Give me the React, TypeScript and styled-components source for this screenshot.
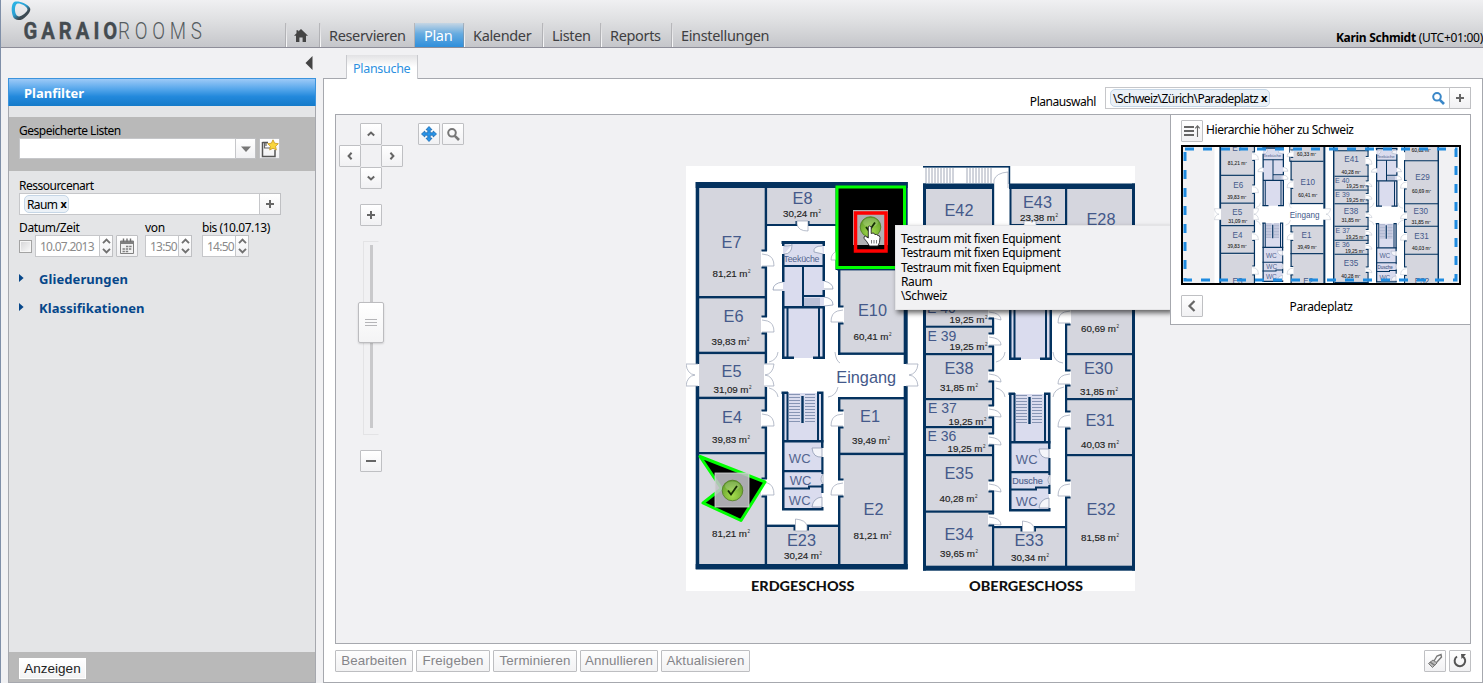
import React from 'react';
import styled, { createGlobalStyle, css } from 'styled-components';

const GlobalStyle = createGlobalStyle`
  * { box-sizing: border-box; }
  body { margin: 0; overflow: hidden; background: #f1f1f3; }
`;

const UI = `'Noto Sans', 'Open Sans', sans-serif`;
const LINE = '#a6a8ae';
const NAVY = '#04325f';

const Window = styled.div`
  width: 1483px;
  height: 683px;
  display: flex;
  flex-direction: column;
  border-left: 1px solid #7f8fa8;
  background: #f1f1f3;
  font: 12px/15px ${UI};
  color: #000;
  overflow: hidden;
`;

/* ---------- header ---------- */

const Header = styled.header`
  height: 48px;
  flex: none;
  display: flex;
  align-items: flex-end;
  background: linear-gradient(#f0f0f2, #dedfe1 45%, #c5c6ca);
  border-bottom: 1px solid #8e8e99;
`;

const LogoBox = styled.div`
  width: 285px;
  height: 47px;
`;

const Nav = styled.nav`
  display: flex;
  flex: 1;
  height: 24px;
`;

const NavItem = styled.a<{ $w: number; $active?: boolean }>`
  width: ${(p) => p.$w}px;
  padding-left: 8px;
  font-size: 14.5px;
  line-height: 24px;
  letter-spacing: -0.34px;
  white-space: nowrap;
  color: #3f3f42;
  border-left: 1px solid transparent;
  border-image: linear-gradient(#d4d4d7, #fff) 1;
  box-shadow: -1px 0 0 rgba(140, 140, 145, 0.45);
  ${(p) =>
    p.$active &&
    css`
      color: #fff;
      border-image: none;
      background: linear-gradient(#c6d6e4, #66abe0 45%, #2f8fdb);
    `}
`;

const User = styled.div`
  white-space: nowrap;
  font-size: 12px;
  letter-spacing: -0.29px;
  line-height: 18px;
`;

/* ---------- body ---------- */

const Body = styled.div`
  flex: 1;
  min-height: 0;
  display: flex;
`;

const Side = styled.aside`
  width: 308px;
  margin-left: 7px;
  display: flex;
  flex-direction: column;
`;

const Collapse = styled.div`
  height: 30px;
  padding: 8px 3px 0 0;
  display: flex;
  justify-content: flex-end;
`;

const SideTitle = styled.h2`
  margin: 0;
  height: 28px;
  padding-left: 15px;
  font: bold 13px/29px ${UI};
  letter-spacing: 0;
  color: #fff;
  border: 1px solid #3b93dc;
  border-bottom: 0;
  background: linear-gradient(#9dcaf7, #5aa9ec 35%, #2389dc 65%, #147ac9);
`;

const SideBody = styled.div`
  flex: 1;
  display: flex;
  flex-direction: column;
  background: #e4e5e7;
  border: solid ${LINE};
  border-width: 0 1px 1px;
`;

const SavedLists = styled.div`
  margin-top: 11px;
  height: 54px;
  padding: 6px 10px;
  background: #b9b9b9;
`;

const Fields = styled.div`
  flex: 1;
  padding: 7px 10px;
`;

const SideFoot = styled.div`
  height: 30px;
  padding: 6px 10px;
  background: #b9b9b9;
`;

const ShowButton = styled.button`
  width: 67px;
  height: 21px;
  padding: 0;
  border: 1px solid #fff;
  background: linear-gradient(#fff, #f3f3f4);
  font: 13.5px/18px 'Liberation Sans', sans-serif;
  color: #222;
`;

const Label = styled.div<{ $ls?: number }>`
  height: 15px;
  letter-spacing: ${(p) => p.$ls ?? -0.5}px;
  white-space: nowrap;
`;

const DateLabel = styled(Label)`
  height: 20px;
  padding-top: 5px;
`;

const Row = styled.div<{ $gap?: number }>`
  display: flex;
  align-items: center;
  gap: ${(p) => p.$gap ?? 0}px;
`;

const Gap = styled.span<{ $w?: number }>`
  width: ${(p) => p.$w ?? 4}px;
  flex: none;
`;

const Input = styled.div<{ $w: number; $h?: number; $muted?: boolean }>`
  width: ${(p) => p.$w}px;
  height: ${(p) => p.$h ?? 22}px;
  display: flex;
  align-items: center;
  padding: 0 0 0 4px;
  background: #fff;
  border: 1px solid #c6c7ca;
  color: ${(p) => (p.$muted ? '#8a8a8a' : '#000')};
  letter-spacing: ${(p) => (p.$muted ? -0.75 : 0)}px;
  white-space: nowrap;
`;

const Square = styled.button<{ $w?: number; $h?: number; $joined?: boolean }>`
  width: ${(p) => p.$w ?? 22}px;
  height: ${(p) => p.$h ?? 22}px;
  flex: none;
  padding: 0;
  display: flex;
  align-items: center;
  justify-content: center;
  border: 1px solid #bfc0c3;
  border-left-width: ${(p) => (p.$joined ? 0 : 1)}px;
  border-radius: ${(p) => (p.$joined ? 0 : 1)}px;
  background: linear-gradient(#fff, #f1f1f3);
`;

const Chip = styled.span<{ $ls?: number }>`
  height: 18px;
  padding: 0 2px 0 2px;
  line-height: 17px;
  letter-spacing: ${(p) => p.$ls ?? -0.6}px;
  border: 1px solid #c5d6e6;
  border-radius: 5px;
  background: #ebf1f7;
  b { margin-left: 3px; font-size: 11px; position: relative; top: -1px; }
`;

const DateCol = styled.div<{ $w: number }>`
  width: ${(p) => p.$w}px;
`;

const Check = styled.span`
  width: 13px;
  height: 13px;
  margin-right: 3px;
  border: 1px solid #a3a3a3;
  background: linear-gradient(135deg, #d4d4d6, #fbfbfb);
  box-shadow: inset 0 0 0 1px #f6f6f6;
`;

const Sections = styled.div`
  margin-top: 8px;
`;

const Section = styled.div`
  display: flex;
  align-items: center;
  gap: 15px;
  height: 29px;
  font-weight: bold;
  font-size: 13px;
  letter-spacing: 0.08px;
  color: #06478a;
  svg { margin-bottom: 4px; }
`;

/* ---------- main ---------- */

const Main = styled.main`
  width: 1160px;
  margin-left: 7px;
  display: flex;
  flex-direction: column;
`;

const Tabs = styled.div`
  height: 30px;
  padding: 7px 0 0 23px;
`;

const Tab = styled.div`
  position: relative;
  z-index: 1;
  width: 72px;
  height: 24px;
  padding-left: 6px;
  font-size: 12.5px;
  line-height: 27px;
  letter-spacing: -0.3px;
  color: #2b8fe0;
  border: solid #c8c9cd;
  border-width: 0 1px;
  background: linear-gradient(#e2e2e4, #fff 50%);
`;

const Panel = styled.section`
  flex: 1;
  display: flex;
  flex-direction: column;
  padding: 8px 11px 0;
  background: #fff;
  border: 1px solid ${LINE};
`;

const PickerRow = styled.div`
  height: 27px;
  display: flex;
  justify-content: flex-end;
`;

const PickerLabel = styled.span`
  margin-right: 9px;
  line-height: 30px;
  letter-spacing: -0.45px;
`;

const Grow = styled.span`
  flex: 1;
`;

const Canvas = styled.div`
  position: relative;
  height: 530px;
  background: #f1f1f3;
  border: 1px solid ${LINE};
`;

const At = styled.div<{ $x: number; $y: number }>`
  position: absolute;
  left: ${(p) => p.$x - 336}px;
  top: ${(p) => p.$y - 115}px;
  display: flex;
`;

const Pad = styled.div`
  display: grid;
  grid-template-columns: 21px 21px 22px;
  grid-template-rows: 22px 22px 22px;
`;

const Cell = styled.div<{ $c: number; $r: number }>`
  grid-column: ${(p) => p.$c};
  grid-row: ${(p) => p.$r};
  width: 22px;
`;

const Zoomer = styled.div`
  width: 26px;
  display: flex;
  flex-direction: column;
  align-items: center;
`;

const Track = styled.div`
  width: 16px;
  height: 194px;
  margin: 15px 0;
  padding: 3px 0 6px;
  display: flex;
  justify-content: center;
  border: 1px solid #e3e3e5;
  border-right-color: #f1f1f3;
  position: relative;
`;

const Rail = styled.div`
  width: 3px;
  background: #c9c9cb;
`;

const Thumb = styled.div`
  position: absolute;
  top: 60px;
  left: -6px;
  width: 26px;
  height: 41px;
  display: flex;
  align-items: center;
  justify-content: center;
  border: 1px solid #bcbcbf;
  border-radius: 2px;
  background: linear-gradient(#fff, #f4f4f5);
  box-shadow: 0 1px 2px rgba(0, 0, 0, 0.15);
`;

const Tooltip = styled.div`
  width: 276px;
  height: 85px;
  padding: 6px 5px;
  background: #f1f1f3;
  border: 1px solid #e4e4e6;
  box-shadow: 2px 3px 5px rgba(0, 0, 0, 0.6);
  line-height: 14.3px;
  letter-spacing: -0.38px;
`;

const Overview = styled.div`
  width: 301px;
  height: 211px;
  padding: 5px 10px;
  display: flex;
  flex-direction: column;
  background: #fff;
  border: 1px solid ${LINE};
`;

const HigherLabel = styled(Label)`
  margin-bottom: 3px;
`;

const MiniFrame = styled.div`
  position: relative;
  width: 280px;
  height: 140px;
  margin: 3px 0 10px;
  flex: none;
  border: 2px solid #000;
  background: #f1f1f3;
  overflow: hidden;
  svg { display: block; }
`;

const OverviewName = styled.div`
  flex: 1;
  padding-right: 21px;
  text-align: center;
  letter-spacing: -0.35px;
`;

const Footer = styled.div`
  display: flex;
  gap: 3px;
  padding-top: 6px;
`;

const Action = styled.button<{ $w: number }>`
  width: ${(p) => p.$w}px;
  height: 22px;
  padding: 0;
  border: 1px solid #bdbec1;
  border-radius: 1px;
  background: linear-gradient(#fdfdfd, #f2f2f3);
  font: 13.33px/18px 'Liberation Sans', sans-serif;
  letter-spacing: 0.12px;
  color: #858589;
  white-space: nowrap;
`;

/* ---------- icons ---------- */

const Chevron = ({ turn = 0 }: { turn?: number }) => (
  <svg width="10" height="10" viewBox="0 0 10 10">
    <path d="M1.8 6.6 5 3.6 8.2 6.6" fill="none" stroke="#666" strokeWidth="2" transform={`rotate(${turn} 5 5)`} />
  </svg>
);

const Plus = () => (
  <svg width="10" height="10" viewBox="0 0 10 10">
    <path d="M5 1V9M1 5H9" stroke="#666" strokeWidth="2" />
  </svg>
);

const Lens = ({ color }: { color: string }) => (
  <svg width="15" height="15" viewBox="0 0 15 15">
    <circle cx="6" cy="5.8" r="3.8" fill="none" stroke={color} strokeWidth="2" />
    <path d="M8.8 8.8 13 13" stroke={color} strokeWidth="2.6" />
  </svg>
);

const Spin = () => (
  <Square $w={13} $joined>
    <svg width="9" height="18" viewBox="0 0 9 18">
      <path d="M1 6.2 4.5 2.6 8 6.2M1 11.8 4.5 15.4 8 11.8" fill="none" stroke="#707070" strokeWidth="1.9" />
    </svg>
  </Square>
);

const CalendarIcon = () => (
  <svg width="16" height="17" viewBox="0 0 16 17">
    <path d="M1.500 3H14.500V15.500H1.500Z" fill="#f2f2f2" stroke="#808080" />
    <path d="M1 3H15V6H1Z" fill="#808080" />
    <path d="M4.5 .5V4M8 .5V4M11.500 .5V4" stroke="#707070" strokeWidth="1.400" />
    <path d="M7 8.500H13M3.500 11H13M3.500 13.500H10" stroke="#808080" strokeWidth="1.6" strokeDasharray="2.4 .8" />
  </svg>
);

const SaveStar = () => (
  <svg width="19" height="19" viewBox="0 0 19 19">
    <path d="M2.5 3.5H8M2.5 3V17.5H15V11" fill="none" stroke="#555" strokeWidth="1.5" />
    <path d="M4.5 4V9H10M6 4V7" fill="none" stroke="#666" strokeWidth="1.2" />
    <path d="M13 .8 14.6 4.2 18.3 4.7 15.6 7.3 16.3 11 13 9.2 9.7 11 10.4 7.3 7.7 4.7 11.4 4.2Z" fill="#f9d63c" stroke="#c9971a" strokeWidth=".8" />
  </svg>
);

const MoveIcon = () => (
  <svg width="16" height="16" viewBox="0 0 16 16">
    <path
      d="M8 .5 11 3.8H9.2V6.8H12.2V5L15.5 8 12.2 11V9.2H9.2V12.2H11L8 15.5 5 12.2H6.8V9.2H3.8V11L.5 8 3.8 5V6.8H6.8V3.8H5Z"
      fill="#2a96ea"
      stroke="#1467b0"
      strokeWidth=".8"
    />
  </svg>
);

const UpLevel = () => (
  <svg width="18" height="14" viewBox="0 0 18 14">
    <path d="M1 3H11M1 7H11M1 11H11" stroke="#666" strokeWidth="2" />
    <path d="M14.5 13V2M12.3 4.4 14.5 1.8 16.7 4.4" fill="none" stroke="#666" strokeWidth="1.1" />
  </svg>
);

const Triangle = () => (
  <svg width="5" height="8" viewBox="0 0 5 8">
    <path d="M0 0 4.6 4 0 8Z" fill="#06478a" />
  </svg>
);

const Logo = () => (
  <svg width="285" height="47" viewBox="1 0 285 47">
    <defs>
      <linearGradient id="ring" x1="0" y1="0" x2=".8" y2="1">
        <stop offset="0" stopColor="#2cb9ea" />
        <stop offset=".5" stopColor="#2a9fd2" />
        <stop offset=".75" stopColor="#3d4a52" />
      </linearGradient>
    </defs>
    <path
      fillRule="evenodd"
      fill="url(#ring)"
      d="M14.500 1.800C19 .8 27 3.500 30 8C31.500 11 27.500 16 22.500 19.200C18.500 21 14 19.800 13 16.500C11.300 12 10.800 4 14.500 1.800ZM17 3.800C14.500 5.500 14.500 11 16 14.300C17 16.600 19.500 17 21.800 15.600C25 13.600 28.300 10.500 27.300 8.700C25.500 5.500 20 2.800 17 3.800Z"
    />
    <g fontFamily="Roboto, sans-serif" fontSize="23.500">
      <text transform="translate(23.500 38.500) scale(.86 1)" fontWeight="700" fill="#444b50" stroke="#444b50" strokeWidth=".4" textLength="109">GARAIO</text>
      <text transform="translate(118 38.500) scale(.8 1)" fontWeight="300" fill="#555c60" textLength="105">ROOMS</text>
    </g>
  </svg>
);

const HomeIcon = styled.svg`
  margin-left: -2px;
  position: relative;
  top: 2px;
`;

const Home = () => (
  <HomeIcon width="16" height="15" viewBox="0 0 16 15">
    <path d="M8 1 15 7.800H13V14H9.600V9.500H6.400V14H3V7.800H1L3.500 5.300V2.200H5.300V3.600Z" fill="#444" />
  </HomeIcon>
);

/* ---------- floor plan ---------- */

type Box = [number, number, number, number];

const rooms: Box[] = [
  [699, 188, 67, 108], [699, 298, 67, 54], [699, 354, 67, 43], [699, 399, 67, 54], [699, 455, 67, 110],
  [767, 188, 69, 36], [837, 188, 67, 80], [839, 270, 65, 83], [839, 399, 65, 54], [839, 455, 65, 110],
  [767, 527, 71, 38],
  [926, 189, 67, 58], [926, 249, 67, 49], [926, 300, 67, 26], [926, 327, 67, 27], [926, 355, 67, 43],
  [926, 400, 67, 26], [926, 428, 67, 26], [926, 456, 67, 55], [926, 512, 67, 54],
  [994, 528, 72, 38], [1011, 189, 54, 35], [1067, 189, 65, 78], [1067, 269, 65, 84], [1067, 355, 65, 43],
  [1067, 400, 65, 54], [1067, 456, 65, 110],
];

const walls: Box[] = [
  // ground floor: shell
  [695.7, 182, 212, 6], [695.7, 182, 3.5, 182], [695.7, 386, 3.5, 183], [903.700, 182, 4, 182], [903.700, 386, 4, 183],
  [695.7, 564, 212, 5.500],
  // ground floor: room divisions
  [699, 296, 68, 2.400], [699, 351.700, 68, 2.400], [699, 396.700, 68, 2.400], [699, 452, 68, 2.400],
  [764.700, 188, 2.400, 63], [764.700, 267, 2.400, 50], [764.700, 333.500, 2.400, 30], [764.700, 387, 2.400, 24],
  [764.700, 427, 2.400, 52], [764.700, 496, 2.400, 69],
  [767, 224, 30, 2], [808, 224, 29, 2], [795.500, 221, 2, 5], [807.500, 221, 2, 5],
  [835.500, 188, 2, 82], [837, 268, 67, 2.400], [838, 268, 2.400, 39], [838, 323, 2.400, 32], [838, 352.500, 66, 2.400],
  [838, 397, 66, 2.400], [838, 397, 2.400, 14], [838, 427, 2.400, 53], [838, 496, 2.400, 69], [838, 452.700, 66, 2.400],
  [767, 524.600, 28, 2.400], [807, 524.600, 32, 2.400], [793.500, 525, 2, 5.500], [807, 525, 2, 5.500],
  // first floor: shell
  [923, 183.500, 71, 5.500], [1009, 183.500, 126, 5.500], [923, 183.500, 3, 387], [1132, 183.500, 3, 387],
  [923, 565.700, 212, 5], [923, 166, 87, 1.600], [1008.600, 166, 1.600, 18],
  // first floor: room divisions
  [926, 247, 68, 2.200], [926, 298, 68, 2.200], [926, 325.700, 68, 2], [926, 353, 68, 2.200], [926, 398, 68, 2.200],
  [926, 426, 68, 2.200], [926, 454, 68, 2.200], [926, 510.500, 68, 2.200],
  [992, 184, 2.200, 76], [992, 276, 2.200, 33], [992, 317, 2.200, 17], [992, 346, 2.200, 25],
  [992, 381, 2.200, 25], [992, 417, 2.200, 17], [992, 445, 2.200, 36], [992, 491, 2.200, 23], [992, 525, 2.200, 42],
  [1009.500, 189, 2, 36], [1011, 224, 13, 2], [1036, 224, 30, 2], [1065, 189, 2.200, 62], [1065, 267, 68, 2.200],
  [1065, 267, 2.200, 40], [1065, 324, 2.200, 47], [1065, 353, 68, 2.200], [1065, 385, 2.200, 27],
  [1065, 398, 68, 2.200], [1065, 428, 2.200, 53], [1065, 454, 68, 2.200], [1065, 497, 2.200, 69],
  [994, 526, 28, 2.200], [1034, 526, 32, 2.200], [1020.500, 526, 2, 5.500], [1034, 526, 2, 5.500],
];

// x of the wall, y of the opening, height of the opening, side the leaf swings to
const doors: [number, number, number, 1 | -1][] = [
  [766, 251, 16, 1], [766, 317, 16, 1], [766, 411, 16, 1], [766, 479, 17, 1],
  [839, 307, 16, -1], [839, 411, 16, -1], [839, 480, 16, -1], [839, 247, 14, -1],
  [993, 260, 16, 1], [993, 309, 9, 1], [993, 334, 12, 1], [993, 371, 10, 1], [993, 406, 11, 1], [993, 434, 11, 1],
  [993, 481, 10, 1], [993, 514, 11, 1],
  [1066, 308, 16, -1], [1066, 371, 14, -1], [1066, 412, 16, -1], [1066, 481, 16, -1],
];

type Tag = [string, number, number, number?];

const names: Tag[] = [
  ['E7', 731.5, 248], ['E6', 733.5, 322], ['E5', 731.5, 377], ['E4', 732, 423], ['E3', 732, 514],
  ['E8', 802.5, 204], ['E9', 870, 238], ['E10', 872.5, 316], ['E1', 870, 422], ['E2', 873.5, 515], ['E23', 801.5, 546],
  ['Eingang', 866.2, 382.500],
  ['E42', 959, 216], ['E41', 960, 270], ['E38', 959, 374], ['E35', 959, 478.5], ['E34', 959, 539.5],
  ['E33', 1029, 545.5], ['E43', 1037.5, 208], ['E28', 1101, 224.5], ['E29', 1102, 306], ['E30', 1098.5, 374],
  ['E31', 1100, 425.500], ['E32', 1101, 515],
  ['E 40', 941.5, 312.500, 14], ['E 39', 942, 340.500, 14], ['E 37', 942.500, 413, 14], ['E 36', 942, 440.500, 14],
];

const areas: Tag[] = [
  ['81,21', 731.5, 276.500], ['39,83', 730.5, 345], ['31,09', 732.5, 392.500], ['39,83', 731, 443], ['81,21', 731, 536.700],
  ['30,24', 802, 216.500], ['60,33', 870, 258], ['60,41', 872.5, 340], ['39,49', 871, 444], ['81,21', 872.5, 539],
  ['30,24', 803, 558.500], ['40,28', 958, 236], ['40,28', 959, 294], ['19,25', 968.500, 323], ['19,25', 968.500, 350],
  ['31,85', 959, 390.500], ['19,25', 967.500, 424.500], ['19,25', 966.500, 452], ['40,28', 958.500, 501.700],
  ['39,65', 959, 557], ['30,34', 1030, 560.500], ['23,38', 1039, 220.500], ['60,62', 1099, 250], ['60,69', 1100, 332],
  ['31,85', 1099, 395], ['40,03', 1100, 447.500], ['81,58', 1100, 540.500],
];

const hatch = (x0: number, x1: number, y0: number, y1: number, step: number, across: boolean) => {
  let d = '';
  if (across) for (let y = y0; y <= y1; y += step) d += `M${x0} ${y}H${x1}`;
  else for (let x = x0; x <= x1; x += step) d += `M${x} ${y0}V${y1}`;
  return d;
};

const Core = ({ middle }: { middle: string }) => (
  <g>
    <path d="M783 243H824V358H783ZM783 393H822V509H783Z" fill="#dadcee" />
    <g fill={NAVY}>
      <path d="M781.500 241H825V244H781.500ZM782 241H784.500V246H782ZM822.500 241H825V246H822.500ZM782 254H784.500V282H782ZM822.500 254H825V281H822.500ZM782 265H825V267H782Z" />
      <path d="M802 266H804V307H802ZM803 295H825V297H803ZM822.500 290H825V297H822.500ZM782 306H825V308.500H782ZM782 291H784.500V358H782ZM822.500 306H825V358H822.500Z" />
      <path d="M786.500 308H788.500V358H786.500ZM818 308H820V358H818ZM782 356.500H794V359H782ZM813 356.500H825V359H813Z" />
      <path d="M781.500 391.500H788V394H781.500ZM782 392H784.500V510H782ZM786.500 392H788.500V441H786.500ZM817 391.500H823.500V394H817ZM817 392H819V441H817ZM821 392H823.500V448H821Z" />
      <path d="M801.300 396H803.700V423H801.300ZM782 440H823.500V442.500H782ZM782 470H823V472.200H782ZM782 487.500H809V489.500H782ZM808 485.500H810V489.500H808ZM809 485.500H823V487.500H809Z" />
      <path d="M821.300 457H823.500V474H821.300ZM821.300 484H823.500V493H821.300ZM821.300 507H823.500V510.500H821.300ZM782 508H823V510.500H782Z" />
    </g>
    <path d={hatch(789, 800, 394.500, 422, 3, true) + hatch(805, 815, 394.500, 422, 3, true)} stroke="#8795b4" strokeWidth="1" />
    <path d={hatch(805, 819, 298, 306, 2, false)} stroke="#8795b4" strokeWidth=".8" />
    <path d="M822 448V457Q813 458 812 448ZM822 497Q813 498 812 507H822ZM823 474Q819 479 823 484ZM784 246Q793 246 792 244M784 254Q792 254 792 245M822 246Q813 246 814 252L823 254M783 282Q773 283 773 290H783M824 281Q833 283 833 289H824M824 297Q833 298 833 305L824 306" fill="#fff" fillOpacity=".7" stroke="#8490aa" strokeWidth=".7" />
    <g fill="#52648f" textAnchor="middle">
      <text x="801.500" y="261.500" fontSize="8.800" textLength="36">Teeküche</text>
      <text x="799.700" y="462.500" fontSize="13">WC</text>
      <text x="800.500" y={middle === 'WC' ? 484.500 : 483} fontSize={middle === 'WC' ? 13 : 9} stroke={middle === 'WC' ? 'none' : '#52648f'} strokeWidth=".2">{middle}</text>
      <text x="799.700" y="505" fontSize="13">WC</text>
    </g>
  </g>
);

const Building = () => (
  <g fontFamily="'Liberation Sans', sans-serif">
    <rect x="686" y="166" width="449" height="425" fill="#fff" />
    {rooms.map(([x, y, w, h], i) => (
      <rect key={i} x={x} y={y} width={w} height={h} fill="#d5d6de" />
    ))}
    <path d={hatch(926, 953, 168, 183, 3, false) + hatch(967, 992, 168, 183, 3, false)} stroke="#8a93a5" strokeWidth=".8" />
    {walls.map(([x, y, w, h], i) => (
      <rect key={i} x={x} y={y} width={w} height={h} fill={NAVY} />
    ))}
    {doors.map(([x, y, h, s], i) => (
      <g key={i}>
        <rect x={s > 0 ? x - 5 : x - 2} y={y} width="7" height={h} fill="#fff" />
        <path d={`M${x - s * 4} ${y + 3}L${x + s * 1.5} ${y + 4}Q${x + s * 8} ${y + 6} ${x + s * 8} ${y + Math.max(h, 12) - 1}L${x - s * 4} ${y + h - 1}`} fill="#fff" stroke="#99a2b5" strokeWidth=".7" />
        <path d={`M${x - s * 4.500} ${y - 0.500}H${x + s}M${x - s * 4.500} ${y + h + 0.500}H${x + s}`} stroke={NAVY} strokeWidth="2" />
      </g>
    ))}
    <g fill="#fff" stroke="#99a2b5" strokeWidth=".7">
      <path d="M797 221H808V231Q798 231 797 224ZM795.500 531V519Q806 520 807 526V531ZM1022.500 532V521Q1033 522 1034 528V532ZM1024 221H1036V231Q1025 231 1024 224Z" />
      <path d="M698 364H686Q687 374 695 375Q687 376 686 386H698M764 364H774Q773 374 765 375Q773 376 774 386H764M906 364H918Q917 374 909 375Q917 376 918 386H906" />
      <path d="M769 362Q777 360 778 352M769 388Q777 390 778 397M835 352Q836 361 840 363M828 397Q836 396 838 387M996 362Q1004 360 1005 352M996 388Q1004 390 1005 397M1053 352Q1054 362 1063 363M1053 397Q1054 389 1064 387" fill="none" />
      <path d="M994 184V180Q996 173 1008 172V188" />
    </g>
    <Core middle="WC" />
    <g transform="translate(227 1)">
      <Core middle="Dusche" />
    </g>
    <g fill="#44598a" textAnchor="middle">
      {names.map(([t, x, y, size]) => (
        <text key={t} x={x} y={y} fontSize={size ?? 16.300}>{t}</text>
      ))}
    </g>
    <g fill="#1e1e22" fontSize="9.800">
      {areas.map(([t, x, y], i) => (
        <g key={i}>
          <text x={x - 19} y={y} textLength="35" stroke="#1e1e22" strokeWidth=".15">{t} m</text>
          <text x={x + 16.500} y={y - 4} fontSize="4.500">2</text>
        </g>
      ))}
    </g>
    <g fontFamily="Lato, sans-serif" fontWeight="900" fontSize="14" fill="#111">
      <text x="751" y="590.500" textLength="103.500" lengthAdjust="spacingAndGlyphs">ERDGESCHOSS</text>
      <text x="969" y="590.500" textLength="114" lengthAdjust="spacingAndGlyphs">OBERGESCHOSS</text>
    </g>
  </g>
);

const Ball = ({ x, y }: { x: number; y: number }) => (
  <g>
    <circle cx={x} cy={y} r="10.300" fill="url(#ball)" stroke="#4c7a1c" strokeWidth=".8" />
    <ellipse cx={x} cy={y - 4.5} rx="7.500" ry="4.500" fill="#fff" fillOpacity=".18" />
    <path d={`M${x - 4.500} ${y}L${x - 1.500} ${y + 4}L${x + 4.500} ${y - 4.500}`} fill="none" stroke="#142c04" strokeWidth="1.800" />
  </g>
);

const Plan = () => (
  <svg width="449" height="425" viewBox="686 166 449 425">
    <defs>
      <radialGradient id="ball" cx=".5" cy=".75" r=".75">
        <stop offset="0" stopColor="#a4dc4c" />
        <stop offset="1" stopColor="#5f9a2a" />
      </radialGradient>
    </defs>
    <Building />
    <rect x="837" y="187" width="67.500" height="80.500" fill="#000" stroke="#0f0" strokeWidth="3" />
    <rect x="853" y="210" width="35" height="35" fill="#b0b0b2" />
    <Ball x={870.5} y={227} />
    <rect x="855.500" y="213" width="30.500" height="38" fill="none" stroke="#f00" strokeWidth="3.500" />
    <path
      d="M868.300 226.500Q870 225 871.200 227V233.500L873 233Q874.500 233 874.800 234.500Q877 233.800 877.600 235.500Q879.800 235 880 237.500Q880 243 878 246H869.500Q867 241.500 864.200 238.500Q863 236.500 865.500 236.200L868.300 238Z"
      fill="#fff"
      stroke="#222"
      strokeWidth=".9"
    />
    <path d="M871.500 240V243.500M874 240V243.500M876.500 240V243.500" stroke="#444" strokeWidth=".7" />
    <path d="M700 456.500 765 482 741 520.500 703 503 721.500 488.500Z" fill="#000" stroke="#0f0" strokeWidth="3" strokeLinejoin="round" />
    <rect x="715" y="473" width="34" height="34" fill="#c3c3c7" fillOpacity=".88" stroke="#d6d6d8" strokeWidth=".8" />
    <Ball x={732.5} y={490.5} />
  </svg>
);

const MiniMap = () => (
  <MiniFrame>
    <svg width="276" height="136" viewBox="0 0 276 136">
      <g transform="translate(-311.500 -120.300) scale(.5)">
        <Building />
      </g>
      <rect x="2" y="2" width="271" height="131" fill="none" stroke="#1f8be0" strokeWidth="3" strokeDasharray="9 9" />
    </svg>
  </MiniFrame>
);

/* ---------- page ---------- */

export default function App() {
  return (
    <>
      <GlobalStyle />
      <Window>
        <Header>
          <LogoBox><Logo /></LogoBox>
          <Nav>
            <NavItem $w={34}><Home /></NavItem>
            <NavItem $w={95}>Reservieren</NavItem>
            <NavItem $w={49} $active>Plan</NavItem>
            <NavItem $w={79}>Kalender</NavItem>
            <NavItem $w={58}>Listen</NavItem>
            <NavItem $w={71}>Reports</NavItem>
            <NavItem $w={120}>Einstellungen</NavItem>
          </Nav>
          <User><b>Karin Schmidt</b> (UTC+01:00)</User>
        </Header>
        <Body>
          <Side>
            <Collapse>
              <svg width="8" height="14" viewBox="0 0 8 14"><path d="M7.500 0V14L.5 7Z" fill="#444" /></svg>
            </Collapse>
            <SideTitle>Planfilter</SideTitle>
            <SideBody>
              <SavedLists>
                <Label>Gespeicherte Listen</Label>
                <Row>
                  <Input $w={217} $h={21} />
                  <Square $w={20} $h={21} $joined>
                    <svg width="10" height="6" viewBox="0 0 10 6"><path d="M0 .5H10L5 6Z" fill="#777" /></svg>
                  </Square>
                  <Gap $w={3} />
                  <Square $w={21} $h={21}><SaveStar /></Square>
                </Row>
              </SavedLists>
              <Fields>
                <Label>Ressourcenart</Label>
                <Row>
                  <Input $w={241}><Chip>Raum<b>x</b></Chip></Input>
                  <Square $w={21} $joined><Plus /></Square>
                </Row>
                <Row>
                  <DateCol $w={126}>
                    <DateLabel $ls={-0.35}>Datum/Zeit</DateLabel>
                    <Row>
                      <Check />
                      <Input $w={65} $muted>10.07.2013</Input>
                      <Spin />
                      <Gap $w={3} />
                      <Square><CalendarIcon /></Square>
                    </Row>
                  </DateCol>
                  <DateCol $w={57}>
                    <DateLabel $ls={-0.35}>von</DateLabel>
                    <Row><Input $w={34} $muted>13:50</Input><Spin /></Row>
                  </DateCol>
                  <DateCol $w={80}>
                    <DateLabel $ls={-0.45}>bis (10.07.13)</DateLabel>
                    <Row><Input $w={34} $muted>14:50</Input><Spin /></Row>
                  </DateCol>
                </Row>
                <Sections>
                  <Section><Triangle />Gliederungen</Section>
                  <Section><Triangle />Klassifikationen</Section>
                </Sections>
              </Fields>
              <SideFoot><ShowButton>Anzeigen</ShowButton></SideFoot>
            </SideBody>
          </Side>
          <Main>
            <Tabs><Tab>Plansuche</Tab></Tabs>
            <Panel>
              <PickerRow>
                <PickerLabel>Planauswahl</PickerLabel>
                <Input $w={345}>
                  <Chip $ls={-0.57}>\Schweiz\Zürich\Paradeplatz<b>x</b></Chip>
                  <Grow />
                  <Lens color="#3a87c8" />
                  <Gap $w={3} />
                </Input>
                <Square $w={21} $joined><Plus /></Square>
              </PickerRow>
              <Canvas>
                <At $x={686} $y={166}><Plan /></At>
                <At $x={339} $y={123}>
                  <Pad>
                    <Cell $c={2} $r={1}><Square><Chevron /></Square></Cell>
                    <Cell $c={1} $r={2}><Square><Chevron turn={-90} /></Square></Cell>
                    <Cell $c={3} $r={2}><Square><Chevron turn={90} /></Square></Cell>
                    <Cell $c={2} $r={3}><Square><Chevron turn={180} /></Square></Cell>
                  </Pad>
                </At>
                <At $x={358} $y={204}>
                  <Zoomer>
                    <Square><Plus /></Square>
                    <Track>
                      <Rail />
                      <Thumb>
                        <svg width="12" height="8" viewBox="0 0 12 8"><path d="M0 .5H12M0 3.500H12M0 6.500H12" stroke="#b5b5b8" /></svg>
                      </Thumb>
                    </Track>
                    <Square>
                      <svg width="10" height="10" viewBox="0 0 10 10"><path d="M0 5H10" stroke="#666" strokeWidth="2" /></svg>
                    </Square>
                  </Zoomer>
                </At>
                <At $x={418} $y={123}><Square><MoveIcon /></Square></At>
                <At $x={442} $y={123}><Square><Lens color="#777" /></Square></At>
                <At $x={895} $y={225}>
                  <Tooltip>
                    Testraum mit fixen Equipment<br />
                    Testraum mit fixen Equipment<br />
                    Testraum mit fixen Equipment<br />
                    Raum<br />
                    \Schweiz
                  </Tooltip>
                </At>
                <At $x={1170} $y={114}>
                  <Overview>
                    <Row $gap={3}>
                      <Square><UpLevel /></Square>
                      <HigherLabel $ls={-0.42}>Hierarchie höher zu Schweiz</HigherLabel>
                    </Row>
                    <MiniMap />
                    <Row>
                      <Square>
                        <svg width="10" height="12" viewBox="0 0 10 12"><path d="M7.500 1 2.500 6 7.500 11" fill="none" stroke="#666" strokeWidth="2.200" /></svg>
                      </Square>
                      <OverviewName>Paradeplatz</OverviewName>
                    </Row>
                  </Overview>
                </At>
              </Canvas>
              <Footer>
                <Action $w={78}>Bearbeiten</Action>
                <Action $w={74}>Freigeben</Action>
                <Action $w={84}>Terminieren</Action>
                <Action $w={78}>Annullieren</Action>
                <Action $w={89}>Aktualisieren</Action>
                <Grow />
                <Square>
                  <svg width="16" height="16" viewBox="0 0 16 16">
                    <path d="M1.500 10.500 6 7 10 10 5.500 14.500Z" fill="#bbb" stroke="#777" />
                    <path d="M7 8 10 3 14 1.500 14.500 4 9.500 9.500M3 9 8 12.500" fill="none" stroke="#777" strokeWidth="1.400" />
                  </svg>
                </Square>
                <Square>
                  <svg width="14" height="14" viewBox="0 0 14 14">
                    <path d="M4 2.500A5.300 5.300 0 1 0 9.500 2.300" fill="none" stroke="#555" strokeWidth="2" />
                    <path d="M8 0H13L8.500 5Z" fill="#555" />
                  </svg>
                </Square>
              </Footer>
            </Panel>
          </Main>
        </Body>
      </Window>
    </>
  );
}
